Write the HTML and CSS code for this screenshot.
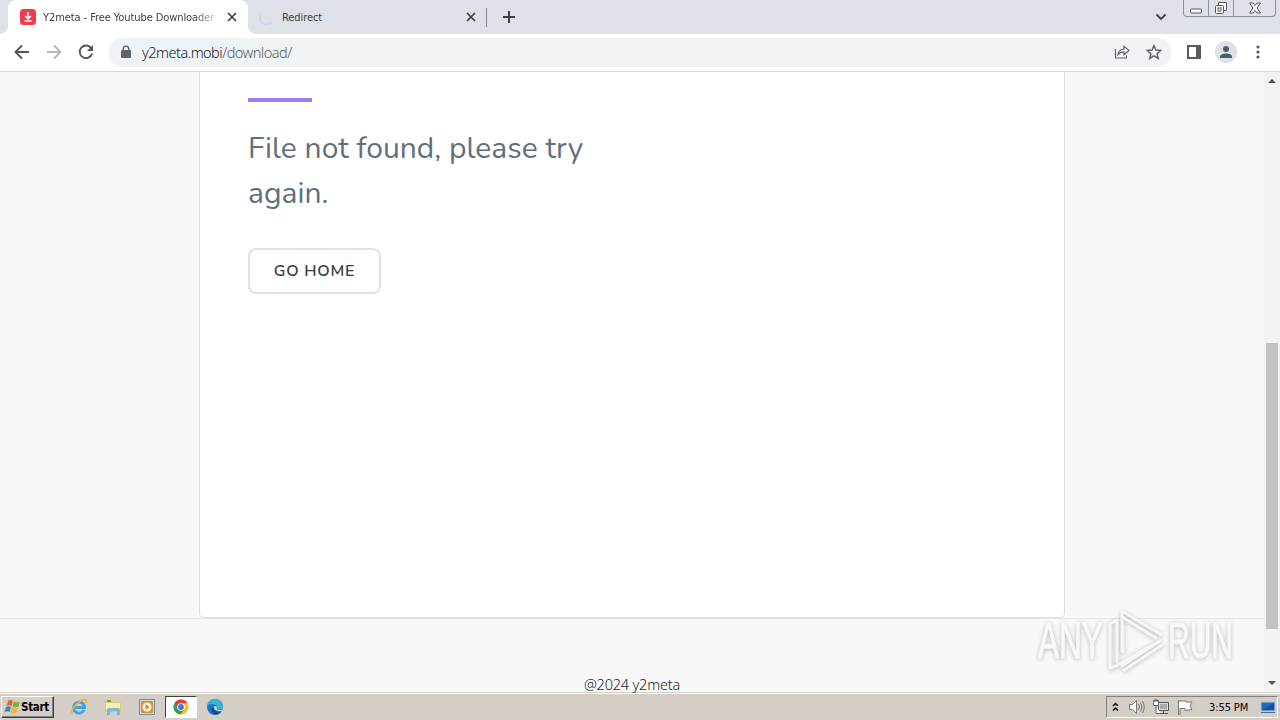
FILE: index.html
```html
<!DOCTYPE html>
<html lang="en">
<head>
    <meta charset="UTF-8">
    <title>Y2meta - Free Youtube Downloader</title>
    <link rel="stylesheet" href="styles.css">
</head>
<body>
    <header class="tab-strip">
        <div class="tab active">
            <svg class="favicon" width="16" height="16" viewBox="0 0 16 16"><rect width="16" height="16" rx="3.5" fill="#f23b4d"/><path d="M8 3v6M5.2 7L8 9.8 10.8 7M4.5 12h7" fill="none" stroke="#fff" stroke-width="1.7"/></svg>
            <span class="tab-title fade">Y2meta - Free Youtube Downloader</span>
            <svg class="close" width="10" height="10" viewBox="0 0 10 10"><path d="M1 1l8 8M9 1L1 9"/></svg>
        </div>
        <div class="tab">
            <svg class="favicon" width="16" height="16" viewBox="0 0 16 16"><path d="M2.4 4.5A6.5 6.5 0 0 0 12.5 13" fill="none" stroke="#c9d8f6" stroke-width="2"/></svg>
            <span class="tab-title">Redirect</span>
            <svg class="close" width="10" height="10" viewBox="0 0 10 10"><path d="M1 1l8 8M9 1L1 9"/></svg>
        </div>
        <svg class="new-tab" width="12" height="12" viewBox="0 0 12 12"><path d="M6 0v12M0 6h12" stroke="#3c4043" stroke-width="2"/></svg>
        <svg class="tab-search" width="12" height="8" viewBox="0 0 12 8"><path d="M1.5 1.5L6 6l4.5-4.5" fill="none" stroke="#3c4043" stroke-width="1.8"/></svg>
        <div class="window-buttons">
            <span><svg width="12" height="6" viewBox="0 0 12 6"><rect x=".5" y="1" width="11" height="4" rx="1"/></svg></span>
            <span><svg width="14" height="14" viewBox="0 0 14 14"><path d="M4.5 4V1.5h8v8H10"/><rect x="1.5" y="4.5" width="8" height="8" rx="1"/><rect x="4" y="7" width="3" height="3"/></svg></span>
            <span><svg width="14" height="12" viewBox="0 0 14 12"><path d="M1.5 1H5l2 2.5L9 1h3.5L9 6l3.5 5H9L7 8.5 5 11H1.5L5 6z"/></svg></span>
        </div>
    </header>

    <nav class="toolbar">
        <svg class="nav-icon" width="16" height="16" viewBox="0 0 16 16"><path d="M15 8H2M8 1.5L1.5 8 8 14.5"/></svg>
        <svg class="nav-icon off" width="16" height="16" viewBox="0 0 16 16"><path d="M1 8h13M8 1.5L14.5 8 8 14.5"/></svg>
        <svg class="nav-icon" width="16" height="16" viewBox="0 0 16 16"><path d="M13.4 4.5A6.3 6.3 0 1 0 14.1 9.5"/><path d="M15 1v6H9z" class="solid"/></svg>
        <div class="omnibox">
            <svg width="10" height="14" viewBox="0 0 10 14"><rect y="5" width="10" height="8" rx="1" fill="#5f6368"/><path d="M2.3 5.5V3.8a2.7 2.7 0 0 1 5.4 0v1.7" fill="none" stroke="#5f6368" stroke-width="1.4"/></svg>
            <span class="url">y2meta.mobi<span class="path">/download/</span></span>
            <svg class="share" width="16" height="16" viewBox="0 0 16 16"><path d="M1.5 5v9h11v-2.5M4 10.5C4.5 7 6.5 5.2 10 5V2.2L15 6.4l-5 4.2V7.9C7.5 8 5.5 8.8 4 10.5z" fill="none" stroke="#5f6368" stroke-width="1.2"/></svg>
            <svg class="star" width="16" height="16" viewBox="0 0 16 16"><path d="M8 1.7l1.9 4.4 4.8.4-3.6 3.2 1.1 4.7L8 11.9l-4.200 2.500 1.100-4.700-3.600-3.200 4.800-.4z" fill="none" stroke="#5f6368" stroke-width="1.5"/></svg>
        </div>
        <svg class="panel" width="14" height="14" viewBox="0 0 14 14"><path d="M1 1h12v12H1z" fill="none" stroke="#5a5b5f" stroke-width="2"/><path d="M9 1h4v12H9z" fill="#5a5b5f"/></svg>
        <svg class="avatar" width="22" height="22" viewBox="0 0 22 22"><circle cx="11" cy="11" r="11" fill="#dde1e6"/><circle cx="11" cy="8" r="3" fill="#4d5a78"/><path d="M5 17v-1.5c0-2 3-3 6-3s6 1 6 3V17z" fill="#4d5a78"/></svg>
        <svg class="more" width="4" height="14" viewBox="0 0 4 14" fill="#55585c"><circle cx="2" cy="2" r="1.6"/><circle cx="2" cy="7" r="1.6"/><circle cx="2" cy="12" r="1.6"/></svg>
    </nav>

    <div class="viewport">
        <div class="page">
            <main class="card">
                <div class="accent"></div>
                <p class="message">File not found, please try<br>again.</p>
                <a class="home-button">GO HOME</a>
            </main>
            <footer>@2024 y2meta</footer>
        </div>
        <div class="scrollbar">
            <svg width="8" height="4" viewBox="0 0 8 4"><path d="M0 4l4-4 4 4z" fill="#505050"/></svg>
            <div class="thumb"></div>
            <svg width="8" height="4" viewBox="0 0 8 4"><path d="M0 0l4 4 4-4z" fill="#505050"/></svg>
        </div>
        <svg class="watermark" width="210" height="72" viewBox="0 0 210 72">
            <text transform="translate(4 54) scale(.63 1)">ANY</text>
            <text transform="translate(134 54) scale(.6 1)">RUN</text>
            <path d="M83 16l-7 4v44l6-2 38-22M88 47V7l39 23.5M89 22v26M83 16v42M88 13l34 21M126 37L88 62M90 66l38-25"/>
        </svg>
    </div>

    <div class="taskbar">
        <div class="start">
            <svg width="16" height="16" viewBox="0 0 16 16"><path d="M4 2c2-1.5 3-1.5 5 0L7.5 7c-2-1-3.5-1-5 0z" fill="#e8622c"/><path d="M10 2.500c2 1 4 1 6 0L14.500 7.500c-2 1-4 1-6 0z" fill="#79ad3e"/><path d="M2 8c2-1 3.500-1 5 0l-1.500 5c-2-1-3.500-1-5 0z" fill="#3b83cb"/><path d="M8 8.500c2 1 4 1 6 0l-1.500 5c-2 1-4 1-6 0z" fill="#f2b62e"/></svg>
            <span>Start</span>
        </div>
        <div class="task">
            <svg width="18" height="18" viewBox="0 0 18 18"><path d="M14 12A5.500 5.500 0 1 1 14.500 9.500H5" fill="none" stroke="#3aa3e0" stroke-width="2.8"/><path d="M2.500 15.500C-1 12 11 0 16 2c1 .5.500 2 0 3" fill="none" stroke="#eab23b" stroke-width="1.5"/></svg>
        </div>
        <div class="task">
            <svg width="18" height="18" viewBox="0 0 18 18"><path d="M1 2h6l1 2h9v10H1z" fill="#e8c967"/><path d="M2 5h14v6H2z" fill="#fbf0b0"/><path d="M3 17v-5q0-2 2-2h9q2 0 2 2v5h-3v-4H6v4z" fill="#78b8dc"/><path d="M3 2h4v2H3z" fill="#65ab54"/></svg>
        </div>
        <div class="task">
            <svg width="18" height="18" viewBox="0 0 18 18"><path d="M1.500 1.500h15v15h-15z" fill="#c2dced" stroke="#6993b5"/><rect x="3" y="3" width="12" height="12" rx="1" fill="#f08a19"/><circle cx="9" cy="9" r="4.5" fill="#fff"/><path d="M7.500 6l4 3-4 3z" fill="#e87808"/></svg>
        </div>
        <div class="task current">
            <svg width="16" height="16" viewBox="0 0 16 16"><circle cx="8" cy="8" r="7.5" fill="#fbc116"/><path d="M1.500 4.300A7.500 7.500 0 0 1 14.500 4.300H8L4.800 9.900z" fill="#e33b2e"/><path d="M1.500 4.300A7.500 7.500 0 0 0 7.500 15.500L11.200 9.900H4.800z" fill="#2da14c"/><circle cx="8" cy="8" r="3.8" fill="#fff"/><circle cx="8" cy="8" r="2.9" fill="#3c78e7"/></svg>
        </div>
        <div class="task">
            <svg width="18" height="18" viewBox="0 0 18 18"><circle cx="9" cy="9" r="8" fill="#1678c8"/><path d="M1.300 8C2 3 5 1 9 1c5 0 8 3 8 7 0 3-2 4-6 4 1-2 1-4-1-5-3-2-7-1-8.700 1z" fill="#36b6cf"/><path d="M7 9c0 3 4 5 8.500 4-2 3-5 4-7 3.500C5 15 4 11 7 9z" fill="#0b5195"/><path d="M8 9.500c0-2 3-2 3 0 0 1-1 2 1 2.500h5v1c-3 1-9 0-9-3.500z" fill="#d5cec7"/></svg>
        </div>
        <div class="tray">
            <svg width="7" height="10" viewBox="0 0 7 10"><path d="M1 4l2.500-2.500L6 4M1 8.500L3.500 6 6 8.500" fill="none" stroke="#000" stroke-width="1.4"/></svg>
            <svg class="t-sound" width="17" height="16" viewBox="0 0 17 16"><path d="M1.500 5.500h3l4-4v13l-4-4h-3z" fill="#fff" stroke="#777"/><path d="M10.500 5q2 3 0 6M12.500 3.500q3 4.500 0 9M14.500 2q3.500 6 0 12" fill="none" stroke="#777"/></svg>
            <svg class="t-net" width="16" height="16" viewBox="0 0 16 16"><path d="M5.500 3.500h10v8h-10zM7 14.500h8M10.500 12v2" fill="#ddd" stroke="#555"/><path d="M7 5h7v5H7z" fill="#aaa"/><path d="M.5 1.500h5v5h-5zM2 0v3M4 0v3M3 7v7.500h5" fill="#fff" stroke="#666"/></svg>
            <svg class="t-flag" width="16" height="16" viewBox="0 0 16 16"><path d="M1.500 1v14.500h1.500V9.500h5v2l7-1-2-3.500 2-4H9v-1H2" fill="#fff" stroke="#777"/></svg>
            <span class="clock">3:55 PM</span>
            <svg class="desktop" width="16" height="13" viewBox="0 0 16 13"><path d="M1 1h14v9H1z" fill="#2469b7" stroke="#a9cae8"/><path d="M2 9L14 2v7z" fill="#1c4d98"/><path d="M1 11.500h14" stroke="#446b9b"/></svg>
        </div>
    </div>
</body>
</html>
```
FILE: styles.css
```css
* { box-sizing: border-box; }
body { margin: 0; width: 1280px; height: 720px; overflow: hidden; display: flex; flex-direction: column; font-family: "DejaVu Sans Condensed", "DejaVu Sans", sans-serif; background: #fff; }
svg { display: block; flex: none; }

/* tabs */
.tab-strip { flex: none; height: 34px; padding-left: 8px; background: #dee1e8; display: flex; align-items: center; }
.tab { position: relative; width: 239px; height: 34px; padding-left: 11px; display: flex; align-items: center; font-size: 11px; color: #3c4043; }
.tab.active { width: 240px; padding-left: 12px; background: #fff; border-radius: 8px 8px 0 0; }
.tab.active::before, .tab.active::after { content: ""; position: absolute; bottom: 0; width: 8px; height: 8px; }
.tab.active::before { left: -8px; background: radial-gradient(circle at 0 0, #dee1e8 7.5px, #fff 8px); }
.tab.active::after { right: -8px; background: radial-gradient(circle at 100% 0, #dee1e8 7.5px, #fff 8px); }
.tab-title { width: 171px; margin-left: 7px; white-space: nowrap; overflow: hidden; letter-spacing: -0.08px; }
.fade { -webkit-mask-image: linear-gradient(to right, #000 152px, transparent 178px); }
.close { margin-left: 13px; stroke: #3c4043; stroke-width: 1.7; }
.tab:not(.active)::after { content: ""; position: absolute; right: 0; top: 8px; width: 1px; height: 19px; background: #85898f; }
.new-tab { margin-left: 16px; }
.tab-search { margin-left: auto; }
.window-buttons { display: flex; align-self: flex-start; width: 93px; height: 17px; margin: 0 4px 0 16px; border: 1px solid #8c9098; border-top: 0; border-radius: 0 0 4px 4px; }
.window-buttons span { width: 25px; display: flex; justify-content: center; align-items: center; border-right: 1px solid #8c9098; }
.window-buttons span:first-child { padding-top: 5px; }
.window-buttons span:last-child { flex: 1; border: 0; }
.window-buttons svg { fill: #f8f8f9; stroke: #555a62; }

/* toolbar */
.toolbar { flex: none; height: 38px; padding: 0 20px 1px 14px; display: flex; align-items: center; border-bottom: 1px solid #d5d7da; }
.nav-icon { margin-right: 16px; fill: none; stroke: #53565b; stroke-width: 1.9; }
.nav-icon.off { stroke: #b5b7ba; }
.nav-icon .solid { fill: #53565b; stroke: none; }
.nav-icon:nth-child(3) { margin-right: 14px; }
.omnibox { flex: none; width: 1064px; height: 29px; padding: 0 10px 0 13px; border-radius: 15px; background: #f0f3f5; display: flex; align-items: center; }
.url { margin-left: 11px; font: 300 14.5px "Noto Sans", "Open Sans", sans-serif; letter-spacing: -0.52px; color: #15181c; white-space: nowrap; }
.path { color: #565b61; }
.share { margin-left: auto; }
.star { margin-left: 16px; }
.panel { margin-left: 15px; }
.avatar { margin-left: 14px; }
.more { margin-left: 19px; }

/* web page */
.viewport { position: relative; flex: none; height: 620px; display: flex; }
.page { width: 1264px; background: #f8f8f8; display: flex; flex-direction: column; }
.card { flex: none; width: 866px; height: 546px; margin-left: 199px; padding: 26px 48px 0; background: #fff; border: 1px solid #dedede; border-top: 0; border-radius: 0 0 5px 5px; }
.accent { width: 64px; height: 4px; background: #a779e9; }
.message { margin: 24px 0 32px; font: 400 30px/45px Nunito, sans-serif; letter-spacing: 0.04px; color: #606f7b; white-space: nowrap; }
.home-button { display: flex; align-items: center; justify-content: center; width: 133px; height: 46px; border: 2px solid #dfe1e3; border-radius: 8px; font: 600 16px Nunito, sans-serif; letter-spacing: 0.75px; color: #343e48; }
footer { flex: none; height: 74px; padding-top: 56px; border-top: 1px solid #e5e5e5; text-align: center; font: 300 14.5px/18px "Noto Sans", "Open Sans", sans-serif; letter-spacing: -0.2px; color: #20242e; }
.scrollbar { width: 16px; background: #f2f2f2; display: flex; flex-direction: column; align-items: center; padding: 7px 0 7px; }
.thumb { width: 12px; height: 286px; margin: 260px 0 52px; background: #c1c1c1; }
.watermark { position: absolute; left: 1034px; top: 532px; overflow: visible; filter: drop-shadow(0 1px 2px rgba(0, 0, 0, 0.25)); }
.watermark path { fill: none; stroke: #f6f6f6; stroke-width: 3; stroke-linejoin: round; stroke-linecap: round; }
.watermark text { font: 50px "Liberation Sans", sans-serif; fill: #f8f8f8; stroke: #f8f8f8; stroke-width: 1; }

/* taskbar */
.taskbar { flex: 1; padding: 3px 2px 1px 1px; background: #d5cec7; border-top: 1px solid #d5cec7; box-shadow: inset 0 1px #fff; display: flex; }
.start { width: 53px; height: 22px; padding-left: 2px; display: flex; align-items: center; gap: 1px; border: 1px solid; border-color: #fff #404040 #404040 #fff; box-shadow: inset -1px -1px #808080; font-weight: bold; font-size: 11.5px; letter-spacing: -0.3px; margin-right: 8px; }
.task { width: 34px; height: 22px; display: flex; align-items: center; justify-content: center; }
.task.current { width: 32px; margin: 0 1px 0 1px; background: #fff; border: 1px solid; border-color: #404040 #fff #fff #404040; }
.tray { width: 172px; height: 22px; margin-left: auto; padding-left: 5px; display: flex; align-items: center; border: 1px solid; border-color: #808080 #fff #fff #808080; }
.t-sound { margin-left: 9px; }
.t-net { margin-left: 8px; }
.t-flag { margin-left: 8px; }
.clock { width: 40px; margin-left: 16px; font-size: 11px; white-space: nowrap; letter-spacing: -0.1px; }
.desktop { margin-left: 11px; }
```
